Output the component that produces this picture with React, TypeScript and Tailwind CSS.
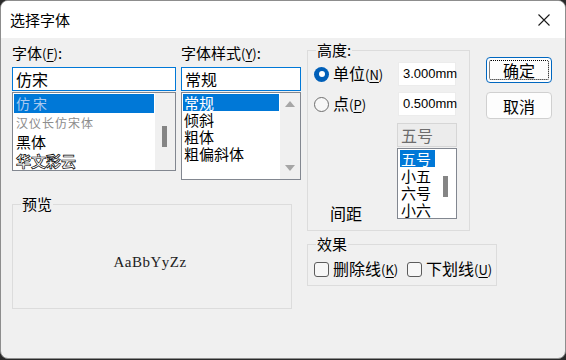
import React from "react"

const cjk = "font-['Noto_Sans_CJK_SC',sans-serif]"

function Key({ k }: { k: string }) {
  return (
    <span className="text-[13px]">
      (<span className="underline underline-offset-2">{k}</span>)
    </span>
  )
}

function Legend({ children }: { children: React.ReactNode }) {
  return (
    <span className="absolute -top-[11px] left-[8px] bg-[#f0f0f0] px-[1px] text-[15px] leading-[20px] text-black">
      {children}
    </span>
  )
}

function Up() {
  return (
    <svg width="10" height="6" viewBox="0 0 10 6">
      <path d="M5 0 L10 6 L0 6 Z" fill="#a6a6a6" />
    </svg>
  )
}

function Down() {
  return (
    <svg width="10" height="6" viewBox="0 0 10 6">
      <path d="M0 0 L10 0 L5 6 Z" fill="#a6a6a6" />
    </svg>
  )
}

export default function App() {
  return (
    <div className={`h-[360px] w-[566px] bg-[#2a2a2a] ${cjk}`}>
      <div className="flex h-[359px] flex-col overflow-hidden rounded-[8px] border border-[#8d8d8d] bg-[#f0f0f0] text-black">
        {/* title bar */}
        <div className="flex h-[37px] shrink-0 items-center justify-between bg-white pl-[9px] pr-[15px]">
          <span className="text-[15px] leading-[20px]">选择字体</span>
          <svg width="12" height="12" viewBox="0 0 12 12">
            <path d="M0.5 0.5 L11.5 11.5 M11.5 0.5 L0.5 11.5" stroke="#1a1a1a" strokeWidth="1.1" />
          </svg>
        </div>

        <div className="flex pl-[11px] pt-[5px]">
          {/* left block */}
          <div className="flex flex-col">
            <div className="flex">
              {/* font */}
              <div className="w-[164px]">
                <div className="text-[15px] leading-[20px]">字体<Key k="F" />:</div>
                <div className="mt-[3px] flex h-[24px] items-center border border-[#0078d7] bg-white pl-[3px] text-[16px]">仿宋</div>
                <div className="mt-[1px] flex h-[79px] border border-[#828790] bg-white">
                  <div className="flex-1 p-[1px]">
                    <div className="h-[19px] bg-[#0078d7] pl-[2px] text-[14px] leading-[19px] tracking-[3px] text-[#a9c9ef]">仿宋</div>
                    <div className="h-[19px] pl-[2px] text-[12px] leading-[19px] tracking-[1px] text-[#8d8d8d]">汉仪长仿宋体</div>
                    <div className="h-[19px] pl-[2px] text-[15px] leading-[19px]">黑体</div>
                    <div className="h-[19px] pl-[2px] text-[15px] font-bold leading-[19px] text-white [-webkit-text-stroke:0.7px_#000]">华文彩云</div>
                  </div>
                  <div className="relative w-[20px] bg-[#f0f0f0]">
                    <div className="absolute left-[7px] top-[33px] h-[21px] w-[5px] bg-[#858585]" />
                  </div>
                </div>
              </div>

              {/* style */}
              <div className="ml-[5px] w-[120px]">
                <div className="text-[15px] leading-[20px]">字体样式<Key k="Y" />:</div>
                <div className="mt-[3px] flex h-[24px] items-center border border-[#0078d7] bg-white pl-[3px] text-[16px]">常规</div>
                <div className="mt-[1px] flex h-[88px] border border-[#828790] bg-white">
                  <div className="flex-1 p-[1px] text-[15px] leading-[17px]">
                    <div className="h-[17px] bg-[#0078d7] pl-[1px] text-white">常规</div>
                    <div className="h-[17px] pl-[1px]">倾斜</div>
                    <div className="h-[17px] pl-[1px]">粗体</div>
                    <div className="h-[17px] pl-[1px]">粗偏斜体</div>
                  </div>
                  <div className="flex w-[20px] flex-col items-center justify-between bg-[#f0f0f0] pb-[8px] pt-[8px]">
                    <Up />
                    <Down />
                  </div>
                </div>
              </div>
            </div>

            {/* preview */}
            <div className="relative mt-[24px] flex h-[105px] w-[280px] items-center justify-center border border-[#dcdcdc] pt-[12px]">
              <Legend>预览</Legend>
              <span className="pr-[4px] font-['Liberation_Serif',serif] text-[15px] tracking-[0.5px] text-[#222]">AaBbYyZz</span>
            </div>
          </div>

          {/* right block */}
          <div className="ml-[6px] flex flex-col">
            <div className="flex items-start">
              {/* height */}
              <div className="relative mt-[7px] h-[181px] w-[163px] border border-[#dcdcdc] px-[6px] pt-[11px]">
                <Legend>高度:</Legend>
                <div className="flex h-[24px] items-center">
                  <div className="flex w-[84px] items-center">
                    <span className="flex h-[15px] w-[15px] items-center justify-center rounded-full bg-[#005fb8]">
                      <span className="h-[6px] w-[6px] rounded-full bg-white" />
                    </span>
                    <span className="ml-[4px] text-[16px] leading-[20px]">单位<Key k="N" /></span>
                  </div>
                  <div className="flex h-[24px] w-[58px] items-center border border-[#ececec] bg-white pl-[4px] font-['Liberation_Sans',sans-serif] text-[13px]">3.000mm</div>
                </div>
                <div className="mt-[6px] flex h-[24px] items-center">
                  <div className="flex w-[84px] items-center">
                    <span className="h-[15px] w-[15px] rounded-full border border-[#6e6e6e] bg-[#f7f7f7]" />
                    <span className="ml-[4px] text-[16px] leading-[20px]">点<Key k="P" /></span>
                  </div>
                  <div className="flex h-[24px] w-[58px] items-center border border-[#ececec] bg-white pl-[4px] font-['Liberation_Sans',sans-serif] text-[13px]">0.500mm</div>
                </div>
                <div className="mt-[7px] flex">
                  <div className="w-[83px] pl-[16px] pt-[80px] text-[16px] leading-[20px]">间距</div>
                  <div className="w-[60px]">
                    <div className="flex h-[24px] items-center border border-[#d6d6d6] bg-[#ececec] pl-[3px] text-[16px] text-[#6d6d6d]">五号</div>
                    <div className="relative mt-[1px] h-[71px] border border-[#828790] bg-white pl-[2px] pt-[1px] text-[15px] leading-[17px]">
                      <div className="w-[35px] bg-[#0078d7] pl-[1px] text-white">五号</div>
                      <div className="pl-[1px]">小五</div>
                      <div className="pl-[1px]">六号</div>
                      <div className="pl-[1px]">小六</div>
                      <div className="absolute left-[45px] top-[27px] h-[21px] w-[5px] bg-[#858585]" />
                    </div>
                  </div>
                </div>
              </div>

              {/* buttons */}
              <div className="ml-[16px] mt-[14px] flex w-[66px] flex-col">
                <button className="flex h-[26px] items-center justify-center rounded-[4px] border border-[#0067c0] bg-[#fdfdfd] p-[2px]">
                  <span className="flex h-full w-full items-center justify-center rounded-[2px] border border-dotted border-black text-[16px] leading-[18px]">确定</span>
                </button>
                <button className="mt-[9px] flex h-[27px] items-center justify-center rounded-[4px] border border-[#d0d0d0] bg-[#fdfdfd] text-[16px] leading-[18px]">取消</button>
              </div>
            </div>

            {/* effects */}
            <div className="relative mt-[13px] h-[42px] w-[190px] border border-[#dcdcdc] pl-[6px] pt-[14px]">
              <Legend>效果</Legend>
              <div className="flex h-[20px] items-center">
                <div className="flex w-[93px] items-center">
                  <span className="h-[15px] w-[15px] rounded-[3px] border border-[#5c5c5c] bg-[#f7f7f7]" />
                  <span className="ml-[4px] text-[16px] leading-[20px]">删除线<Key k="K" /></span>
                </div>
                <div className="flex items-center">
                  <span className="h-[15px] w-[15px] rounded-[3px] border border-[#5c5c5c] bg-[#f7f7f7]" />
                  <span className="ml-[4px] text-[16px] leading-[20px]">下划线<Key k="U" /></span>
                </div>
              </div>
            </div>
          </div>
        </div>
      </div>
    </div>
  )
}
